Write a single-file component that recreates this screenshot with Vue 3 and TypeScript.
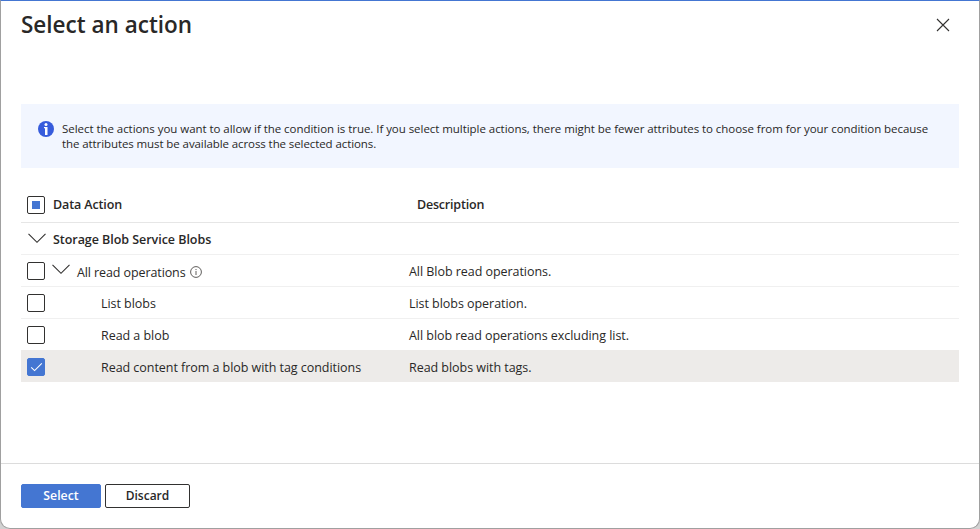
<script setup lang="ts">
import { ref } from 'vue'

interface ActionRow {
  name: string
  description: string
  kind: 'service' | 'group' | 'action'
  checked: boolean
}

const rows = ref<ActionRow[]>([
  { name: 'Storage Blob Service Blobs', description: '', kind: 'service', checked: false },
  { name: 'All read operations', description: 'All Blob read operations.', kind: 'group', checked: false },
  { name: 'List blobs', description: 'List blobs operation.', kind: 'action', checked: false },
  { name: 'Read a blob', description: 'All blob read operations excluding list.', kind: 'action', checked: false },
  { name: 'Read content from a blob with tag conditions', description: 'Read blobs with tags.', kind: 'action', checked: true },
])

function toggle(row: ActionRow) {
  row.checked = !row.checked
}
</script>

<template>
  <div class="backdrop">
    <section class="panel">
      <header class="head">
        <h1>Select an action</h1>
        <button class="close" aria-label="Close">
          <svg width="14" height="14" viewBox="0 0 14 14"><path d="M1 1L13 13M13 1L1 13" /></svg>
        </button>
      </header>

      <div class="notice">
        <svg class="notice-icon" width="16" height="16" viewBox="0 0 16 16">
          <circle cx="8" cy="8" r="8" fill="#375cdc" />
          <circle cx="8" cy="3.5" r="1.5" fill="#fff" />
          <path d="M6 6h3.5v8H7V7.2H6z" fill="#fff" />
        </svg>
        <p>
          <span class="l1">Select the actions you want to allow if the condition is true. If you select multiple actions, there might be fewer attributes to choose from for your condition because</span>
          <br />
          <span class="l2">the attributes must be available across the selected actions.</span>
        </p>
      </div>

      <div class="table">
        <div class="thead">
          <span class="box mixed"></span>
          <span class="th-name">Data Action</span>
          <span class="th-desc">Description</span>
        </div>
        <div v-for="row in rows" :key="row.name" class="row" :class="[row.kind, { selected: row.checked }]">
          <div class="name-cell">
            <button
              v-if="row.kind !== 'service'"
              class="box"
              :class="{ on: row.checked }"
              :aria-label="row.name"
              @click="toggle(row)"
            >
              <svg v-if="row.checked" width="18" height="18" viewBox="0 0 18 18"><path d="M4.2 9.4L7.6 12.6L14.8 5.4" /></svg>
            </button>
            <svg v-if="row.kind !== 'action'" class="chevron" width="18" height="11" viewBox="0 0 18 11">
              <path d="M0.5 0.8L9 9.3L17.5 0.8" />
            </svg>
            <span class="label">{{ row.name }}</span>
            <svg v-if="row.kind === 'group'" class="hint" width="12" height="12" viewBox="0 0 12 12">
              <circle cx="6" cy="6" r="5.4" />
              <path d="M6 5v4M6 3v1.1" />
            </svg>
          </div>
          <span class="desc">{{ row.description }}</span>
        </div>
      </div>

      <footer class="foot">
        <button class="btn primary"><span>Select</span></button>
        <button class="btn"><span>Discard</span></button>
      </footer>
    </section>
  </div>
</template>

<style>
body {
  margin: 0;
}
</style>

<style scoped>
* {
  box-sizing: border-box;
}
button {
  font: inherit;
  color: inherit;
  padding: 0;
  margin: 0;
  background: none;
  border: 0;
}
svg {
  display: block;
  flex: none;
}
.backdrop {
  width: 980px;
  height: 529px;
  overflow: hidden;
  background: #d2d2d2;
  font-family: "Open Sans", "Noto Sans", sans-serif;
  font-size: 12.5px;
  color: #292827;
}
.panel {
  display: flex;
  flex-direction: column;
  width: 980px;
  height: 529px;
  background: #fff;
  border: 1px solid #a0a0a0;
  border-top-color: #4476d2;
  border-radius: 0 0 10px 10px;
}
.head {
  display: flex;
  justify-content: space-between;
  height: 103px;
  padding: 8px 29px 0 20px;
}
h1 {
  margin: 0;
  font-size: 22.5px;
  line-height: 32px;
  font-weight: 600;
  white-space: nowrap;
}
.close {
  height: 14px;
  margin-top: 9px;
}
.close path {
  stroke: #323130;
  stroke-width: 1.1;
}
.notice {
  display: flex;
  height: 64px;
  margin: 0 20px;
  padding: 17px 0 0 17px;
  background: #f2f6ff;
}
.notice p {
  margin: 0 0 0 8px;
  font-size: 11.5px;
  line-height: 15px;
  letter-spacing: -0.048px;
  white-space: nowrap;
}
.l2 {
  letter-spacing: -0.09px;
}
.table {
  margin: 19px 20px 0;
}
.thead {
  display: flex;
  align-items: center;
  height: 36px;
  padding-left: 6px;
  border-bottom: 1px solid #e6e6e6;
  font-weight: 600;
  letter-spacing: -0.12px;
}
.th-name {
  width: 364px;
  margin-left: 8px;
}
.th-desc {
  letter-spacing: -0.2px;
}
.box {
  display: flex;
  flex: none;
  align-items: center;
  justify-content: center;
  width: 18px;
  height: 18px;
  border: 1px solid #323130;
  border-radius: 2px;
  background: #fff;
}
.mixed::after {
  content: "";
  width: 8px;
  height: 8px;
  background: #4476d2;
}
.box.on {
  background: #4476d2;
  border-color: #4476d2;
}
.box path {
  fill: none;
  stroke: #fff;
  stroke-width: 1.1;
}
.row {
  display: flex;
  align-items: center;
  height: 32px;
  padding-left: 6px;
  border-bottom: 1px solid #f0f0f0;
  letter-spacing: -0.045px;
  white-space: nowrap;
}
.row.selected {
  height: 32px;
  margin-top: -1px;
  padding-top: 1px;
  background: #edebe9;
  border-bottom: 0;
}
.name-cell {
  display: flex;
  align-items: center;
  width: 382px;
}
.chevron path {
  fill: none;
  stroke: #323130;
  stroke-width: 1.1;
}
.service .chevron {
  margin-left: 1px;
}
.group .chevron {
  margin: 0 0 2px 7px;
}
.label,
.desc {
  padding-top: 2px;
}
.label {
  margin-left: 7px;
}
.service .label {
  font-weight: 600;
}
.group .label {
  padding-top: 3px;
  letter-spacing: -0.1px;
}
.action .label {
  margin-left: 56px;
}
.hint {
  margin: 2px 0 0 4px;
}
.hint circle,
.hint path {
  fill: none;
  stroke: #605e5c;
  stroke-width: 1;
}
.foot {
  display: flex;
  gap: 4px;
  height: 65px;
  margin-top: auto;
  padding: 20px 20px 0;
  border-top: 1px solid #dcdcdc;
}
.btn {
  display: flex;
  align-items: center;
  justify-content: center;
  width: 85px;
  height: 24px;
  padding-bottom: 2px;
  border: 1px solid #323130;
  border-radius: 2px;
  font-weight: 600;
  font-size: 12px;
}
.btn.primary {
  width: 80px;
  border-color: #4476d2;
  background: #4476d2;
  color: #fff;
  font-size: 12.3px;
}
</style>
